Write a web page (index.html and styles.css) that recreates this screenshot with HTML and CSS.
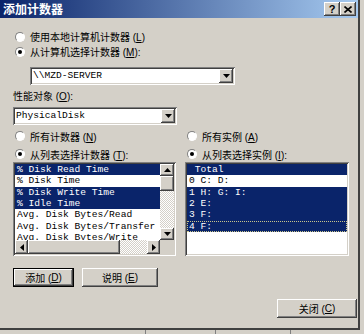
FILE: index.html
```html
<!DOCTYPE html>
<html>
<head>
    <meta charset="UTF-8">
    <title>添加计数器</title>
    <link rel="stylesheet" href="styles.css">
</head>
<body>
    <div class="screen">
        <div class="dialog">
            <div class="titlebar">
                <span class="title">添加计数器</span>
                <div class="caption-btns">
                    <span class="cap-btn raised">?</span>
                    <span class="cap-btn raised">
                        <svg width="8" height="7" viewBox="0 0 8 7"><path d="M0.5 0.5 L7.5 6.5 M7.5 0.5 L0.5 6.5" stroke="#000" stroke-width="1.6"/></svg>
                    </span>
                </div>
            </div>

            <div class="content">
                <div class="radio-row top-first"><span class="radio"></span><span>使用本地计算机计数器 (<u>L</u>)</span></div>
                <div class="radio-row"><span class="radio checked"></span><span>从计算机选择计数器 (<u>M</u>):</span></div>

                <div class="combo sunken combo-machine">
                    <span class="combo-text">\\MZD-SERVER</span>
                    <span class="drop-btn raised">
                        <svg width="7" height="4" viewBox="0 0 7 4"><polygon points="0,0 7,0 3.5,4" fill="#000"/></svg>
                    </span>
                </div>

                <div class="field-label">性能对象 (<u>O</u>):</div>

                <div class="combo sunken combo-object">
                    <span class="combo-text">PhysicalDisk</span>
                    <span class="drop-btn raised">
                        <svg width="7" height="4" viewBox="0 0 7 4"><polygon points="0,0 7,0 3.5,4" fill="#000"/></svg>
                    </span>
                </div>

                <div class="columns">
                    <div class="col col-counters">
                        <div class="radio-row"><span class="radio"></span><span>所有计数器 (<u>N</u>)</span></div>
                        <div class="radio-row"><span class="radio checked"></span><span>从列表选择计数器 (<u>T</u>):</span></div>
                        <div class="listbox sunken">
                            <div class="list-main">
                                <div class="items">
                                    <div class="item selected">% Disk Read Time</div>
                                    <div class="item">% Disk Time</div>
                                    <div class="item selected">% Disk Write Time</div>
                                    <div class="item selected">% Idle Time</div>
                                    <div class="item">Avg. Disk Bytes/Read</div>
                                    <div class="item">Avg. Disk Bytes/Transfer</div>
                                    <div class="item">Avg. Disk Bytes/Write</div>
                                </div>
                                <div class="vscroll">
                                    <span class="sb-btn sb-up raised">
                                        <svg width="7" height="4" viewBox="0 0 7 4"><polygon points="0,4 7,4 3.5,0" fill="#000"/></svg>
                                    </span>
                                    <span class="sb-thumb-v raised"></span>
                                    <span class="sb-track"></span>
                                    <span class="sb-btn sb-down raised">
                                        <svg width="7" height="4" viewBox="0 0 7 4"><polygon points="0,0 7,0 3.5,4" fill="#000"/></svg>
                                    </span>
                                </div>
                            </div>
                            <div class="hscroll">
                                <span class="sb-btn sb-left raised">
                                    <svg width="4" height="7" viewBox="0 0 4 7"><polygon points="4,0 4,7 0,3.5" fill="#000"/></svg>
                                </span>
                                <span class="sb-thumb-h raised"></span>
                                <span class="sb-track"></span>
                                <span class="sb-btn sb-right raised">
                                    <svg width="4" height="7" viewBox="0 0 4 7"><polygon points="0,0 0,7 4,3.5" fill="#000"/></svg>
                                </span>
                                <span class="sb-corner"></span>
                            </div>
                        </div>
                    </div>

                    <div class="col col-instances">
                        <div class="radio-row"><span class="radio"></span><span>所有实例 (<u>A</u>)</span></div>
                        <div class="radio-row"><span class="radio checked"></span><span>从列表选择实例 (<u>I</u>):</span></div>
                        <div class="listbox sunken">
                            <div class="items">
                                <div class="item selected"> Total</div>
                                <div class="item">0 C: D:</div>
                                <div class="item selected">1 H: G: I:</div>
                                <div class="item selected">2 E:</div>
                                <div class="item selected">3 F:</div>
                                <div class="item selected focused">4 F:</div>
                            </div>
                        </div>
                    </div>
                </div>

                <div class="btn-row">
                    <span class="btn btn-default raised btn-add">添加 (<u>D</u>)</span>
                    <span class="btn raised btn-explain">说明 (<u>E</u>)</span>
                </div>

                <div class="close-row">
                    <span class="btn raised btn-close">关闭 (<u>C</u>)</span>
                </div>
            </div>
        </div>

        <div class="statusbar">
            <span class="seg seg-1"></span>
            <span class="seg seg-2"></span>
            <span class="seg seg-3"></span>
            <span class="seg seg-4"></span>
        </div>
    </div>
</body>
</html>
```

FILE: styles.css
```css
* {
    margin: 0;
    padding: 0;
    box-sizing: border-box;
}

body {
    background: #d4d0c8;
    font-family: "Liberation Sans", "Noto Sans CJK SC", sans-serif;
    font-size: 10px;
    color: #000;
}

.screen {
    width: 364px;
    height: 334px;
    overflow: hidden;
}

.dialog {
    width: 360px;
    height: 330px;
    background: #d4d0c8;
    border-right: 2px solid #404040;
    border-bottom: 2px solid #404040;
}

/* 3D frames, Windows classic */
.raised {
    background: #d4d0c8;
    box-shadow: inset -1px -1px #404040, inset 1px 1px #fff, inset -2px -2px #808080, inset 2px 2px #d4d0c8;
}

.sunken {
    padding: 2px;
    box-shadow: inset 1px 1px #808080, inset -1px -1px #fff, inset 2px 2px #404040, inset -2px -2px #d4d0c8;
}

/* title bar */
.titlebar {
    height: 18px;
    display: flex;
    align-items: center;
    justify-content: space-between;
    padding: 0 2px 0 3px;
    background: linear-gradient(to right, #0a246a, #a6caf0);
}

.title {
    color: #fff;
    font-weight: bold;
    font-size: 12px;
    font-family: "Noto Sans CJK SC", sans-serif;
    line-height: 18px;
}

.caption-btns {
    display: flex;
}

.cap-btn {
    width: 16px;
    height: 14px;
    display: flex;
    align-items: center;
    justify-content: center;
    font-weight: bold;
    font-size: 11px;
    line-height: 14px;
}

/* content */
.content {
    padding-left: 13px;
}

.radio-row {
    display: flex;
    align-items: center;
    gap: 5px;
    height: 15px;
    padding-left: 2px;
    white-space: nowrap;
}

.top-first {
    margin-top: 11px;
}

.radio {
    width: 10px;
    height: 10px;
    flex: none;
    border-radius: 50%;
    background: #fff;
    border: 1px solid;
    border-color: #808080 #fff #fff #808080;
    display: flex;
    align-items: center;
    justify-content: center;
}

.radio.checked::after {
    content: "";
    width: 4px;
    height: 4px;
    border-radius: 50%;
    background: #000;
}

.combo {
    height: 18px;
    background: #fff;
    display: flex;
    align-items: stretch;
}

.combo-machine {
    width: 205px;
    margin: 8px 0 0 17px;
}

.combo-object {
    width: 164px;
    margin-top: 3px;
}

.combo-text {
    flex: 1;
    padding-left: 1px;
    font-family: "Liberation Mono", monospace;
    font-size: 9.6px;
    line-height: 14px;
}

.drop-btn {
    width: 14px;
    display: flex;
    align-items: center;
    justify-content: center;
}

.field-label {
    margin-top: 5px;
    height: 14px;
    line-height: 14px;
}

/* counters / instances columns */
.columns {
    display: flex;
    gap: 9px;
    margin-top: 4px;
}

.col {
    display: flex;
    flex-direction: column;
}

.col .radio-row {
    height: 14px;
}

.col .radio-row + .radio-row {
    margin-top: 4px;
}

.col-counters {
    width: 163px;
}

.col-instances {
    width: 164px;
}

.listbox {
    margin-top: 1px;
    height: 94px;
    background: #fff;
    display: flex;
    flex-direction: column;
}

.list-main {
    display: flex;
    height: 76px;
}

.items {
    flex: 1;
    overflow: hidden;
    background: #fff;
}

.item {
    height: 11.33px;
    line-height: 11.33px;
    padding-left: 2px;
    font-family: "Liberation Mono", monospace;
    font-size: 9.6px;
    white-space: pre;
}

.item.selected {
    background: #0a246a;
    color: #fff;
}

.item.focused {
    outline: 1px dotted #c8c48c;
    outline-offset: -1px;
}

/* scrollbars */
.vscroll {
    width: 14px;
    display: flex;
    flex-direction: column;
}

.sb-btn {
    display: flex;
    align-items: center;
    justify-content: center;
    flex: none;
}

.sb-up,
.sb-down {
    height: 12px;
}

.sb-thumb-v {
    height: 15px;
    flex: none;
}

.sb-track {
    flex: 1;
    background: repeating-conic-gradient(#d4d0c8 0 25%, #fff 0 50%) 0 0 / 2px 2px;
}

.hscroll {
    height: 14px;
    display: flex;
}

.sb-left,
.sb-right {
    width: 13px;
}

.sb-thumb-h {
    width: 92px;
    flex: none;
}

.sb-corner {
    width: 14px;
    background: #d4d0c8;
}

/* buttons */
.btn {
    height: 19px;
    display: flex;
    align-items: center;
    justify-content: center;
    white-space: nowrap;
}

.btn-default {
    border: 1px solid #000;
}

.btn-row {
    display: flex;
    gap: 8px;
    margin-top: 12px;
}

.btn-add {
    width: 61px;
}

.btn-explain {
    width: 76px;
}

.close-row {
    display: flex;
    justify-content: flex-end;
    margin-top: 12px;
    padding-right: 1px;
}

.btn-close {
    width: 80px;
}

/* strip of the window behind */
.statusbar {
    height: 4px;
    display: flex;
    background: #d4d0c8;
}

.seg {
    height: 4px;
}

.seg-1 { width: 145px; }
.seg-2 { width: 70px; border-left: 1px solid #808080; }
.seg-3 { width: 75px; border-left: 1px solid #808080; }
.seg-4 { flex: 1; border-left: 1px solid #808080; }
```
